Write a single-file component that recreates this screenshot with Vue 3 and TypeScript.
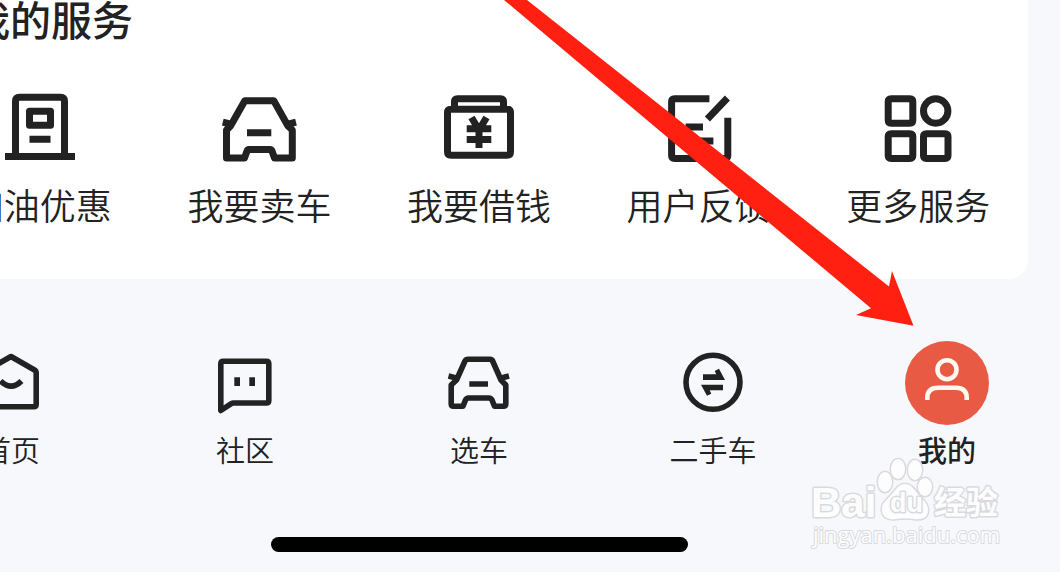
<script setup lang="ts">
interface Entry {
  label: string
  line: string
  solid?: string
  active?: boolean
}

const services: Entry[] = [
  {
    label: '加油优惠',
    line: 'M17.5 70V15.3Q17.5 11.3 21.5 11.3H62.5Q66.5 11.3 66.5 15.3V70M7 70.5H77M31.5 25.2H52.5V39.2H31.5ZM31.5 53.3H52.5',
  },
  {
    label: '我要卖车',
    line: 'M13.5 40L27.8 14.7H56.8L71 40L75.3 44V72H57.5L55 65Q54.5 63.5 53 63.5H32Q30.5 63.5 30 65L27.5 72H9.5V44ZM5.8 36.2L15 38.5M79 36.2L70 38.5M30 46.7H54.3',
  },
  {
    label: '我要借钱',
    line: 'M14 23.2H70Q73.5 23.2 73.5 26.7V65.7Q73.5 69.2 70 69.2H14Q10.5 69.2 10.5 65.7V26.7Q10.5 23.2 14 23.2ZM17.5 23V15.8Q17.5 12.8 20.5 12.8H63.5Q66.5 12.8 66.5 15.8V23M34.5 31.5L42 44L49.5 31.5M42 43V62M29.7 42.8H54.3M29.7 53.5H54.3',
  },
  {
    label: '用户反馈',
    line: 'M52.4 12.8H17.6Q14.6 12.8 14.6 15.8V69.5Q14.6 72.5 17.6 72.5H67.8Q70.8 72.5 70.8 69.5V31.7M70.4 12L50.4 33M28.6 41H46M28.6 55H56.4',
  },
  {
    label: '更多服务',
    line: 'M15.2 12.8H33.8Q36.8 12.8 36.8 15.8V34.2Q36.8 37.2 33.8 37.2H15.2Q12.2 37.2 12.2 34.2V15.8Q12.2 12.8 15.2 12.8ZM15.2 47.8H33.8Q36.8 47.8 36.8 50.8V69.5Q36.8 72.5 33.8 72.5H15.2Q12.2 72.5 12.2 69.5V50.8Q12.2 47.8 15.2 47.8ZM50.5 47.8H69Q72 47.8 72 50.8V69.5Q72 72.5 69 72.5H50.5Q47.5 72.5 47.5 69.5V50.8Q47.5 47.8 50.5 47.8ZM47.5 25A12.2 12.2 0 1 1 71.9 25A12.2 12.2 0 1 1 47.5 25Z',
  },
]

const tabs: Entry[] = [
  {
    label: '首页',
    line: 'M42 15.5L65.5 29Q67.2 30 67.2 32V63.3Q67.2 65.8 64.7 65.8H19.3Q16.8 65.8 16.8 63.3V32Q16.8 30 18.5 29ZM31.5 40Q42 50.5 52.5 40',
  },
  {
    label: '社区',
    line: 'M20.3 20.2H63.3Q65.8 20.2 65.8 22.7V59.5Q65.8 62 63.3 62H30.3Q29.3 62 28.3 62.7L17.8 69.5V22.7Q17.8 20.2 20.3 20.2Z',
    solid: 'M31.3 36.3H37V45H31.3ZM46.3 36.3H52V45H46.3Z',
  },
  {
    label: '选车',
    line: 'M19.5 39L28 20Q29 18.2 31 18.2H53Q55 18.2 55.6 20L64 39L68.8 44V63Q68.8 65.3 66.5 65.3H57.5L55 59Q54 57 52 57H31.5Q29.5 57 28.5 59L26 65.3H16.5Q14.2 65.3 14.2 63V44ZM11.5 35L20 37.2M72 35L63.5 37.2M32.3 43H51',
  },
  {
    label: '二手车',
    line: 'M15 41.3A27 27 0 1 1 69 41.3A27 27 0 1 1 15 41.3Z',
    solid: 'M32 33.3H45.3L43.7 30L48 27.7L54 39H32ZM30 43.7H52V49.3H38.7L40.3 52.7L36 54.7Z',
  },
  {
    label: '我的',
    line: 'M32.5 28.7A9.5 9.5 0 1 1 51.5 28.7A9.5 9.5 0 1 1 32.5 28.7ZM22.3 59V57Q22.3 46.7 33 46.7H51Q61.7 46.7 61.7 57V59',
    active: true,
  },
]
</script>

<template>
  <div class="viewport">
    <main class="screen">
      <section class="card">
        <h2>我的服务</h2>
        <div class="services">
          <button v-for="item in services" :key="item.label" type="button" class="service">
            <svg class="icon" viewBox="0 0 84 84" aria-hidden="true">
              <path class="line" :d="item.line" />
            </svg>
            <span>{{ item.label }}</span>
          </button>
        </div>
      </section>

      <nav class="tabs">
        <a v-for="tab in tabs" :key="tab.label" href="#" class="tab" :class="{ active: tab.active }">
          <svg class="icon" viewBox="0 0 84 84" aria-hidden="true">
            <path class="line" :d="tab.line" />
            <path v-if="tab.solid" class="solid" :d="tab.solid" />
          </svg>
          <span>{{ tab.label }}</span>
        </a>
      </nav>

      <div class="home-bar"></div>
    </main>

    <svg class="arrow" viewBox="0 0 410 326" aria-hidden="true">
      <path d="M0 0H23L385 286.5L388 271L409.5 325.7L352 315L367 308.3Z" />
    </svg>

    <svg class="watermark" viewBox="0 0 194 92">
      <g class="mark">
        <text class="latin" x="1" y="59">Bai</text>
        <ellipse cx="75" cy="24" rx="7" ry="10" />
        <ellipse cx="88" cy="11" rx="7" ry="10" />
        <ellipse cx="105" cy="12" rx="7" ry="10" />
        <ellipse cx="115" cy="29" rx="7" ry="9" />
        <path d="M95 26C89 26 86 31 82 36C77 42 71 45 72 53C73 60 79 62 86 61C92 60 98 60 104 61C112 62 118 60 118 52C118 45 112 41 108 36C104 31 101 26 95 26Z" />
        <text class="du" x="80" y="54">du</text>
        <text class="cjk" x="124" y="56">经验</text>
        <text class="url" x="3" y="85">jingyan.baidu.com</text>
      </g>
    </svg>
  </div>
</template>

<style>
body {
  margin: 0;
  background: #f7f8fc;
}
</style>

<style scoped>
.viewport {
  position: relative;
  min-height: 100vh;
  overflow: hidden;
  background: #f7f8fc;
  color: #222;
  font-family: "Noto Sans CJK SC", sans-serif;
}

.screen {
  margin: 0 -4px 0 -106px;
}

.card {
  margin: 0 36px;
  padding-bottom: 53px;
  border-radius: 0 0 20px 20px;
  background: #fff;
}

h2 {
  margin: 0;
  padding-left: 39px;
  font-size: 41px;
  font-weight: 500;
  line-height: 36px;
}

.services {
  display: grid;
  grid-template-columns: repeat(5, 1fr);
  margin-top: 50px;
}

.service,
.tab {
  display: flex;
  flex-direction: column;
  align-items: center;
  padding: 0;
  border: 0;
  background: none;
  color: inherit;
  font-family: inherit;
  font-weight: 350;
  text-decoration: none;
  white-space: nowrap;
}

.service {
  gap: 12px;
  font-size: 36px;
  line-height: 44px;
}

.icon {
  display: block;
  width: 84px;
  height: 84px;
}

.line {
  fill: none;
  stroke: currentColor;
  stroke-width: 7;
  stroke-linejoin: round;
}

.solid {
  fill: currentColor;
}

.tabs {
  display: grid;
  grid-template-columns: repeat(5, 1fr);
  margin-top: 62px;
}

.tab {
  gap: 6px;
  font-size: 29px;
  line-height: 36px;
}

.tab .line {
  stroke-width: 5.6;
}

.tab.active {
  font-weight: 500;
}

.active .icon {
  border-radius: 50%;
  background: #e95a45;
  color: #fff9f0;
}

.tab.active .line {
  stroke-width: 4.6;
}

.home-bar {
  width: 417px;
  height: 15px;
  margin: 70px auto 20px;
  border-radius: 8px;
  background: #000;
}

.arrow {
  position: absolute;
  top: 0;
  left: 504px;
  width: 410px;
  height: 326px;
  fill: #ff2012;
}

.watermark {
  position: absolute;
  right: 56px;
  bottom: 22px;
  width: 194px;
  height: 92px;
}

.mark {
  fill: #fdfdfe;
  stroke: #d9dade;
  stroke-width: 3;
  stroke-linejoin: round;
  paint-order: stroke;
}

.latin {
  font: bold 42px "Liberation Sans", sans-serif;
}

.du {
  font: bold 27px "Liberation Sans", sans-serif;
}

.cjk {
  font: bold 32px "Noto Sans CJK SC", sans-serif;
}

.url {
  font: 22px "Open Sans", "Noto Sans", sans-serif;
  stroke-width: 2;
}
</style>
